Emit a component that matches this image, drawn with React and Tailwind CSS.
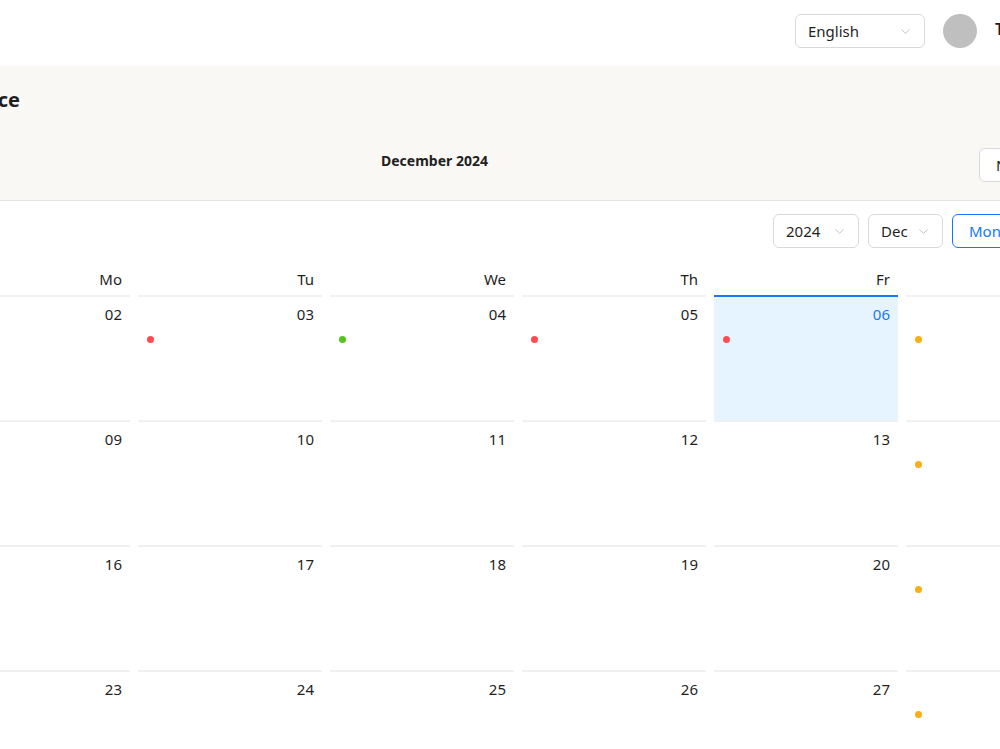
import { ChevronDown } from "lucide-react";

const dots = {
  3: "bg-[#ff4d4f]",
  4: "bg-[#52c41a]",
  5: "bg-[#ff4d4f]",
  6: "bg-[#ff4d4f]",
  7: "bg-[#faad14]",
  14: "bg-[#faad14]",
  21: "bg-[#faad14]",
  28: "bg-[#faad14]",
};

const days = ["Su", "Mo", "Tu", "We", "Th", "Fr", "Sa"];

function buildWeeks() {
  // December 2024 starts on a Sunday
  const cells = [];
  for (let i = 0; i < 42; i++) {
    const d = i + 1;
    if (d <= 31) cells.push({ day: d, inMonth: true });
    else cells.push({ day: d - 31, inMonth: false });
  }
  const weeks = [];
  for (let w = 0; w < 6; w++) weeks.push(cells.slice(w * 7, w * 7 + 7));
  return weeks;
}

function Select({ value, width }) {
  return (
    <div
      className={`flex h-[34px] items-center justify-between rounded-md border border-[#d9d9d9] bg-white pl-[12px] pr-[11px] text-[15px] text-[#1f1f1f] ${width}`}
    >
      <span>{value}</span>
      <ChevronDown size={15} strokeWidth={1.5} className="text-[#bfbfbf]" />
    </div>
  );
}

export default function App() {
  const weeks = buildWeeks();
  return (
    <div className="h-[749px] w-[1000px] overflow-hidden bg-white font-['Noto_Sans',sans-serif] text-[#1f1f1f]">
      <header className="flex h-[66px] items-start gap-[18px] whitespace-nowrap pl-[795px] pt-[14px]">
        <Select value="English" width="w-[130px] shrink-0" />
        <span className="h-[34px] w-[34px] shrink-0 rounded-full bg-[#bfbfbf]" />
        <span className="text-[16px] font-semibold leading-[30px]">Teacher</span>
      </header>

      <section className="h-[135px] border-b border-[#e5e5e5] bg-[#f9f8f5] pt-[20px]">
        <div className="flex w-[20px] justify-end">
          <h1 className="whitespace-nowrap text-[20px] font-bold leading-[28px]">
            Attendance
          </h1>
        </div>
        <div className="mt-[34px] flex items-start whitespace-nowrap pl-[381px]">
          <p className="mt-[2px] w-[598px] shrink-0 text-[14px] font-bold leading-[22px]">
            December 2024
          </p>
          <button className="h-[34px] shrink-0 rounded-md border border-[#d9d9d9] bg-white px-[16px] text-[15px]">
            Next
          </button>
        </div>
      </section>

      <div className="flex gap-[9px] whitespace-nowrap pl-[773px] pt-[13px]">
        <Select value="2024" width="w-[86px] shrink-0" />
        <Select value="Dec" width="w-[75px] shrink-0" />
        <button className="h-[34px] w-[90px] shrink-0 rounded-l-md border border-[#1677ff] bg-white pl-[16px] text-left text-[15px] text-[#1677ff]">
          Month
        </button>
      </div>

      <div className="ml-[-250px] mt-[16px] w-[1344px]">
        <div className="grid grid-cols-7">
          {days.map((d) => (
            <div
              key={d}
              className="flex h-[31px] items-center justify-end pr-[12px] text-[15px]"
            >
              {d}
            </div>
          ))}
        </div>
        {weeks.map((week, w) => (
          <div key={w} className="grid grid-cols-7">
            {week.map((c) => {
              const today = c.inMonth && c.day === 6;
              const dot = c.inMonth ? dots[c.day] : null;
              return (
                <div
                  key={`${w}-${c.day}`}
                  className={`mx-[4px] h-[125px] border-t-2 px-[8px] pt-[5px] ${
                    today
                      ? "border-[#1677ff] bg-[#e6f4ff]"
                      : "border-[#f0f0f0] bg-white"
                  }`}
                >
                  <div
                    className={`text-right text-[15px] leading-[24px] ${
                      today
                        ? "text-[#1677ff]"
                        : c.inMonth
                        ? "text-[#1f1f1f]"
                        : "text-[#bfbfbf]"
                    }`}
                  >
                    {String(c.day).padStart(2, "0")}
                  </div>
                  {dot && (
                    <span
                      className={`ml-[1px] mt-[10px] block h-[7px] w-[7px] rounded-full ${dot}`}
                    />
                  )}
                </div>
              );
            })}
          </div>
        ))}
      </div>
    </div>
  );
}
